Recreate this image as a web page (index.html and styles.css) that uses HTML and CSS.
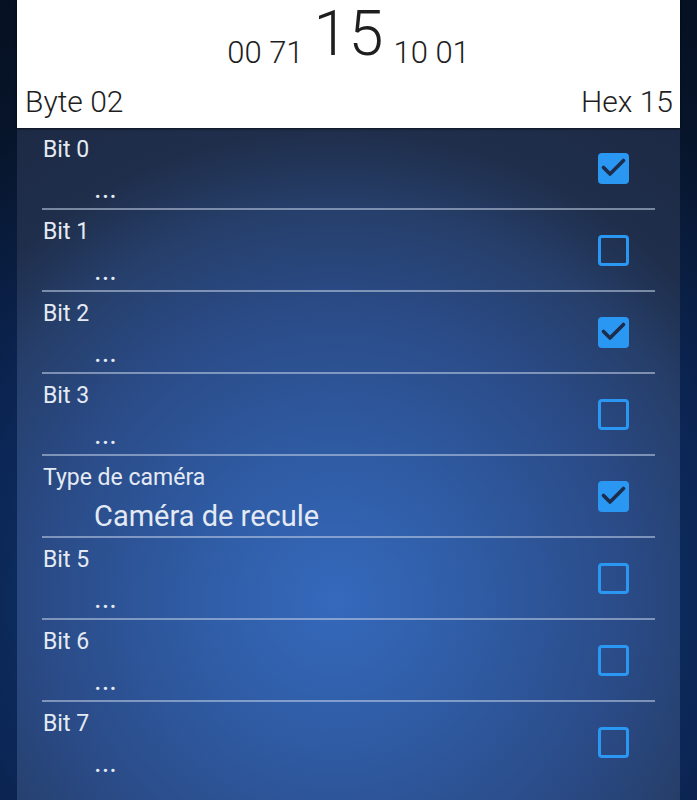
FILE: index.html
```html
<!DOCTYPE html>
<html lang="fr">
<head>
<meta charset="utf-8">
<title>Byte 02</title>
<link rel="stylesheet" href="styles.css">
</head>
<body>
<div class="panel">
  <header class="header">
    <div class="bytes">
      <span class="small">00 71</span>
      <span class="big">15</span>
      <span class="small">10 01</span>
    </div>
    <div class="info">
      <span>Byte 02</span>
      <span>Hex 15</span>
    </div>
  </header>
  <ul class="rows">
    <li class="row"><div class="text"><div class="label">Bit 0</div><div class="value">...</div></div><span class="box checked"><svg viewBox="0 0 31 31"><path d="M5.5 14.5 L12 21 L25.5 7.5"/></svg></span></li>
    <li class="row"><div class="text"><div class="label">Bit 1</div><div class="value">...</div></div><span class="box"></span></li>
    <li class="row"><div class="text"><div class="label">Bit 2</div><div class="value">...</div></div><span class="box checked"><svg viewBox="0 0 31 31"><path d="M5.5 14.5 L12 21 L25.5 7.5"/></svg></span></li>
    <li class="row"><div class="text"><div class="label">Bit 3</div><div class="value">...</div></div><span class="box"></span></li>
    <li class="row"><div class="text"><div class="label">Type de caméra</div><div class="value">Caméra de recule</div></div><span class="box checked"><svg viewBox="0 0 31 31"><path d="M5.5 14.5 L12 21 L25.5 7.5"/></svg></span></li>
    <li class="row"><div class="text"><div class="label">Bit 5</div><div class="value">...</div></div><span class="box"></span></li>
    <li class="row"><div class="text"><div class="label">Bit 6</div><div class="value">...</div></div><span class="box"></span></li>
    <li class="row"><div class="text"><div class="label">Bit 7</div><div class="value">...</div></div><span class="box"></span></li>
  </ul>
</div>
</body>
</html>
```
FILE: styles.css
```css
html, body {
  margin: 0;
  padding: 0;
}
body {
  min-height: 800px;
  font-family: Roboto, "Noto Sans", "Liberation Sans", sans-serif;
  background: radial-gradient(circle at 50% 75%, #1a4a99 0, #0c2a5c 330px, #0b2451 400px, #07152b 570px, #050f1f 720px);
  background-attachment: fixed;
}
.panel {
  margin: 0 17px;
  min-height: 800px;
  background: radial-gradient(circle at 48% 75%, #3569bc 0, #2f5ba3 150px, #2a4a85 300px, #263f6b 390px, #1f2e4b 470px, #1c2944 600px);
}
.header {
  background: #ffffff;
  height: 128px;
  box-sizing: border-box;
  padding-top: 2px;
  color: #1e1e1e;
  font-weight: 300;
  box-shadow: 0 1px 2px rgba(0, 0, 0, 0.6);
  position: relative;
}
.bytes {
  display: flex;
  justify-content: center;
  align-items: flex-end;
  gap: 10px;
}
.small {
  font-size: 31px;
  line-height: 31px;
}
.big {
  font-size: 63px;
  line-height: 63px;
  padding-bottom: 3px;
}
.info {
  display: flex;
  justify-content: space-between;
  margin-top: 17px;
  padding: 0 7px 0 8px;
  font-size: 30px;
  line-height: 34px;
}
.rows {
  list-style: none;
  margin: 0;
  padding: 0 25px;
}
.row {
  display: flex;
  justify-content: space-between;
  align-items: flex-start;
  box-sizing: border-box;
  height: 82px;
  padding-top: 8px;
  border-bottom: 2px solid rgba(196, 210, 232, 0.55);
  color: #e4eaf3;
}
.row:last-child {
  border-bottom: none;
}
.text {
  padding-left: 1px;
}
.label {
  font-size: 23px;
  line-height: 27px;
}
.value {
  font-size: 29px;
  line-height: 34px;
  margin-top: 8px;
  padding-left: 51px;
}
.box {
  width: 31px;
  height: 31px;
  box-sizing: border-box;
  margin-top: 17px;
  margin-right: 26px;
  border: 3px solid #2a98f2;
  border-radius: 4px;
  display: block;
}
.box.checked {
  border: none;
  background: #2a98f2;
}
.box svg {
  display: block;
  width: 31px;
  height: 31px;
}
.box path {
  fill: none;
  stroke: #1c2c4a;
  stroke-width: 3.6;
  stroke-linecap: round;
  stroke-linejoin: round;
}
```
